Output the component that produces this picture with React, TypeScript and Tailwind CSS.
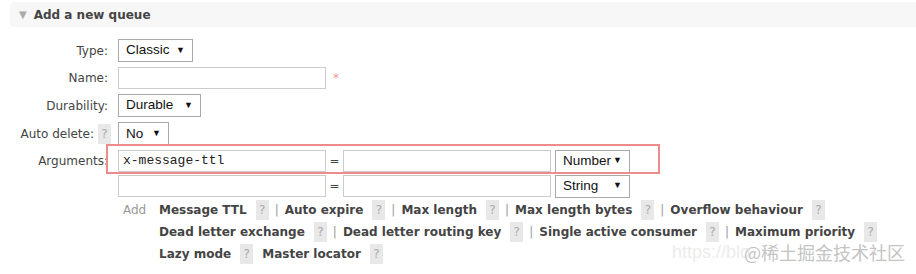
import React from 'react';

const Help = ({ className = '' }: { className?: string }) => (
  <span className={`inline-flex h-[20px] w-[13px] items-center justify-center bg-[#e8e8e8] text-[12px] font-normal text-[#aaa] ${className}`}>
    ?
  </span>
);

const Select = ({ value, width }: { value: string; width: string }) => (
  <div
    className={`flex h-full items-center justify-between border border-[#a9a9a9] bg-white pl-[7px] pr-[7px] text-[13.5px] text-[#111] ${width}`}
    style={{ fontFamily: '"Liberation Sans", Arial, sans-serif' }}
  >
    <span>{value}</span>
    <span className="text-[9px]">▼</span>
  </div>
);

const Input = ({ value = '', width = 'w-[208px]' }: { value?: string; width?: string }) => (
  <div
    className={`flex h-full items-center border border-[#ccc] bg-white px-[4px] text-[13px] text-[#222] ${width}`}
    style={{ fontFamily: '"Liberation Mono", "Courier New", monospace' }}
  >
    {value}
  </div>
);

const Row = ({ label, help, className, children }: { label: string; help?: boolean; className: string; children: React.ReactNode }) => (
  <div className={`flex items-center ${className}`}>
    <div className="flex w-[118px] shrink-0 items-center justify-end gap-[4px] pr-[10px] text-[12px] text-[#444]">
      <span>{label}</span>
      {help && <Help className="-mr-[3px]" />}
    </div>
    <div className="flex h-full items-center">{children}</div>
  </div>
);

const links: [string, string][][] = [
  [['Message TTL', '|'], ['Auto expire', '|'], ['Max length', '|'], ['Max length bytes', '|'], ['Overflow behaviour', '']],
  [['Dead letter exchange', '|'], ['Dead letter routing key', '|'], ['Single active consumer', '|'], ['Maximum priority', '']],
  [['Lazy mode', ''], ['Master locator', '']],
];

export default function App() {
  return (
    <div className="relative h-[274px] w-[916px] overflow-hidden bg-white" style={{ fontFamily: '"DejaVu Sans", Verdana, sans-serif' }}>
      <div className="ml-[10px] mt-[2px] flex h-[25px] items-center rounded-l-[4px] bg-[#f7f7f7] pl-[9px]">
        <span className="mr-[7px] text-[10px] text-[#aaa]">▼</span>
        <span className="text-[12px] font-bold text-[#444]">Add a new queue</span>
      </div>

      <div className="mt-[12px] flex flex-col">
        <Row label="Type:" className="h-[23px]">
          <Select value="Classic" width="w-[75px]" />
        </Row>
        <Row label="Name:" className="mt-[5px] h-[22px]">
          <Input />
          <span className="ml-[7px] self-start pt-[2px] text-[12px] text-[#f49a9a]">*</span>
        </Row>
        <Row label="Durability:" className="mt-[5px] h-[23px]">
          <Select value="Durable" width="w-[83px]" />
        </Row>
        <Row label="Auto delete:" help className="mt-[5px] h-[24px]">
          <Select value="No" width="w-[51px]" />
        </Row>
        <div className="relative">
          <div className="pointer-events-none absolute left-[106px] top-[-2px] h-[30px] w-[554px] border-2 border-[#ee8b8b]" />
          <Row label="Arguments:" className="mt-[4px] h-[22px]">
            <Input value="x-message-ttl" />
            <span className="w-[17px] text-center text-[12px] text-[#444]">=</span>
            <Input />
            <div className="ml-[4px] h-[23px]">
              <Select value="Number" width="w-[75px]" />
            </div>
          </Row>
        </div>
        <Row label="" className="mt-[3px] h-[22px]">
          <Input />
          <span className="w-[17px] text-center text-[12px] text-[#444]">=</span>
          <Input />
          <div className="ml-[4px] h-[23px]">
            <Select value="String" width="w-[75px]" />
          </div>
        </Row>

        <div className="mt-[2px] flex">
          <div className="ml-[123px] w-[36px] pt-[2px] text-[12px] text-[#999]">Add</div>
          <div className="flex flex-col">
            {links.map((line, i) => (
              <div key={i} className="flex h-[22px] items-center whitespace-nowrap text-[12px] font-bold text-[#444]">
                {line.map(([name, sep], j) => (
                  <span key={j} className="flex items-center">
                    <span>{name}</span>
                    <Help className="ml-[9px]" />
                    {sep && <span className="mx-[6px] font-normal text-[#999]">{sep}</span>}
                    {!sep && <span className="w-[9px]" />}
                  </span>
                ))}
              </div>
            ))}
          </div>
        </div>
      </div>

      <div className="pointer-events-none absolute left-[672px] top-[243px] flex items-center whitespace-nowrap leading-none">
        <span className="text-[18px] text-[#ececec]" style={{ fontFamily: '"Liberation Sans", Arial, sans-serif' }}>https://blo</span>
        <span className="-ml-[6px] text-[18px] text-[#c4c4c4]" style={{ fontFamily: '"Noto Sans CJK SC", sans-serif' }}>@稀土掘金技术社区</span>
      </div>
    </div>
  );
}
